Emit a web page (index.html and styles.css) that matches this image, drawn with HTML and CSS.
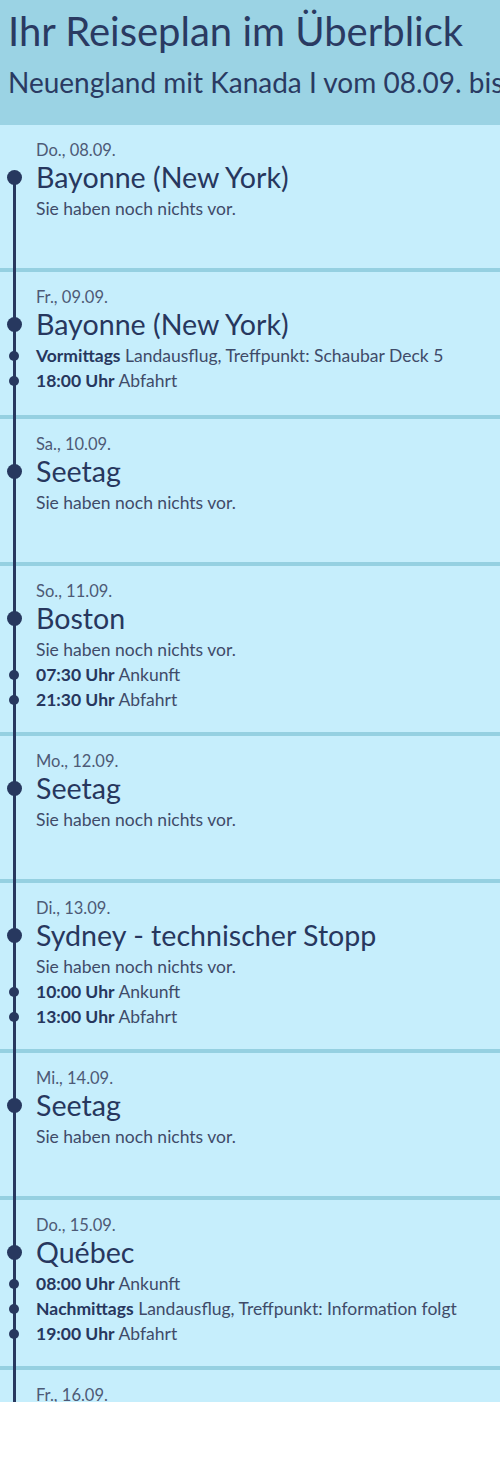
FILE: index.html
```html
<!DOCTYPE html>
<html lang="de">
<head>
  <meta charset="UTF-8">
  <title>Ihr Reiseplan im Überblick</title>
  <link rel="stylesheet" href="styles.css">
</head>
<body>

  <div class="plan">
    <header class="plan-head">
      <h1>Ihr Reiseplan im Überblick</h1>
      <p class="plan-sub">Neuengland mit Kanada I vom 08.09. bis</p>
    </header>

    <div class="days">
      <section class="day">
        <div class="day-date">Do., 08.09.</div>
        <h2 class="day-port">Bayonne (New York)</h2>
        <p class="day-note">Sie haben noch nichts vor.</p>
      </section>

      <section class="day">
        <div class="day-date">Fr., 09.09.</div>
        <h2 class="day-port">Bayonne (New York)</h2>
        <ul class="events">
          <li><b>Vormittags</b> Landausflug, Treffpunkt: Schaubar Deck 5</li>
          <li><b>18:00 Uhr</b> Abfahrt</li>
        </ul>
      </section>

      <section class="day">
        <div class="day-date">Sa., 10.09.</div>
        <h2 class="day-port">Seetag</h2>
        <p class="day-note">Sie haben noch nichts vor.</p>
      </section>

      <section class="day">
        <div class="day-date">So., 11.09.</div>
        <h2 class="day-port">Boston</h2>
        <p class="day-note">Sie haben noch nichts vor.</p>
        <ul class="events">
          <li><b>07:30 Uhr</b> Ankunft</li>
          <li><b>21:30 Uhr</b> Abfahrt</li>
        </ul>
      </section>

      <section class="day">
        <div class="day-date">Mo., 12.09.</div>
        <h2 class="day-port">Seetag</h2>
        <p class="day-note">Sie haben noch nichts vor.</p>
      </section>

      <section class="day">
        <div class="day-date">Di., 13.09.</div>
        <h2 class="day-port">Sydney - technischer Stopp</h2>
        <p class="day-note">Sie haben noch nichts vor.</p>
        <ul class="events">
          <li><b>10:00 Uhr</b> Ankunft</li>
          <li><b>13:00 Uhr</b> Abfahrt</li>
        </ul>
      </section>

      <section class="day">
        <div class="day-date">Mi., 14.09.</div>
        <h2 class="day-port">Seetag</h2>
        <p class="day-note">Sie haben noch nichts vor.</p>
      </section>

      <section class="day">
        <div class="day-date">Do., 15.09.</div>
        <h2 class="day-port">Québec</h2>
        <ul class="events">
          <li><b>08:00 Uhr</b> Ankunft</li>
          <li><b>Nachmittags</b> Landausflug, Treffpunkt: Information folgt</li>
          <li><b>19:00 Uhr</b> Abfahrt</li>
        </ul>
      </section>

      <section class="day day-last">
        <div class="day-date">Fr., 16.09.</div>
      </section>
    </div>
  </div>

</body>
</html>
```

FILE: styles.css
```css
body {
  margin: 0;
  background: #fff;
  font-family: 'Lato', 'Liberation Sans', sans-serif;
  color: #27375e;
}

.plan {
  height: 1402px;
  overflow: hidden;
  background-color: #c6eefc;
}

.plan-head {
  background-color: #9bd3e4;
  padding: 7px 0 27px 8px;
  white-space: nowrap;
  overflow: hidden;
}

.plan-head h1 {
  margin: 0;
  font-size: 40px;
  line-height: 48px;
  font-weight: normal;
  color: #2a3a62;
}

.plan-sub {
  margin: 11px 0 0;
  font-size: 28px;
  line-height: 32px;
  color: #2a3a62;
}

.days {
  position: relative;
}

/* the timeline */
.days::before {
  content: "";
  position: absolute;
  left: 13px;
  top: 53px;
  bottom: 0;
  width: 3px;
  background-color: #27385f;
}

.day {
  box-sizing: border-box;
  min-height: 147px;
  padding: 15px 0 20px 36px;
  border-bottom: 4px solid #95d0e1;
}

.day-last {
  min-height: 30px;
  padding-bottom: 0;
  border-bottom: none;
}

.day-date {
  font-size: 16.5px;
  line-height: 20px;
  color: #4d5a76;
}

.day-port {
  position: relative;
  margin: 0 0 2px;
  font-size: 28.6px;
  line-height: 34px;
  font-weight: normal;
  color: #27375e;
}

.day-port::before {
  content: "";
  position: absolute;
  left: -29px;
  top: 10px;
  width: 15px;
  height: 15px;
  border-radius: 50%;
  background-color: #27385f;
}

.day-note {
  margin: 0;
  font-size: 17.5px;
  line-height: 25px;
  color: #3f4b69;
}

.events {
  list-style: none;
  margin: 0;
  padding: 0;
  font-size: 17.5px;
  line-height: 25px;
  color: #3f4b69;
}

.events li {
  position: relative;
}

.events li::before {
  content: "";
  position: absolute;
  left: -27px;
  top: 8px;
  width: 10px;
  height: 10px;
  border-radius: 50%;
  background-color: #27385f;
}

.events b {
  color: #27375e;
}
```
